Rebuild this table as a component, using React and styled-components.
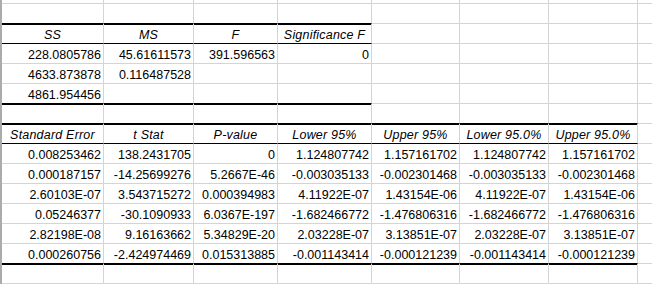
import React from "react";
import styled, { createGlobalStyle } from "styled-components";

const GlobalStyle = createGlobalStyle`
  html, body {
    margin: 0;
    padding: 0;
    background: #fff;
    overflow: hidden;
  }
`;

const COLS = [102, 90, 84, 94, 88, 89, 89, 20];
const GRID = "#d4d4d4";

const Sheet = styled.div`
  display: grid;
  grid-template-columns: ${COLS.map((w) => `${w}px`).join(" ")};
  grid-template-rows: 4px;
  grid-auto-rows: 20px;
  border-left: 2px solid #ababab;
  width: max-content;
  font-family: "Liberation Sans", Arial, sans-serif;
  font-size: 12.5px;
  color: #000;
`;

const Cell = styled.div`
  box-sizing: border-box;
  border-right: 1px solid ${GRID};
  border-bottom: 1px solid ${(p) => (p.$edge ? "#000" : GRID)};
  box-shadow: ${(p) => (p.$edge === "thick" ? "0 1px 0 #000" : "none")};
  padding: 4px 2px 0 2px;
  line-height: 15px;
  white-space: nowrap;
  overflow: visible;
  text-align: ${(p) => (p.$head ? "center" : "right")};
  font-style: ${(p) => (p.$head ? "italic" : "normal")};
  letter-spacing: ${(p) => (p.$head ? "0.2px" : "0")};
`;

const EdgeCell = styled(Cell)`
  padding: 0;
`;

const TOP_HEAD = ["SS", "MS", "F", "Significance F"];
const TOP_ROWS = [
  ["228.0805786", "45.61611573", "391.596563", "0"],
  ["4633.873878", "0.116487528"],
  ["4861.954456"],
];

const COEF_HEAD = [
  "Standard Error",
  "t Stat",
  "P-value",
  "Lower 95%",
  "Upper 95%",
  "Lower 95.0%",
  "Upper 95.0%",
];
const COEF_ROWS = [
  ["0.008253462", "138.2431705", "0", "1.124807742", "1.157161702", "1.124807742", "1.157161702"],
  ["0.000187157", "-14.25699276", "5.2667E-46", "-0.003035133", "-0.002301468", "-0.003035133", "-0.002301468"],
  ["2.60103E-07", "3.543715272", "0.000394983", "4.11922E-07", "1.43154E-06", "4.11922E-07", "1.43154E-06"],
  ["0.05246377", "-30.1090933", "6.0367E-197", "-1.682466772", "-1.476806316", "-1.682466772", "-1.476806316"],
  ["2.82198E-08", "9.16163662", "5.34829E-20", "2.03228E-07", "3.13851E-07", "2.03228E-07", "3.13851E-07"],
  ["0.000260756", "-2.424974469", "0.015313885", "-0.001143414", "-0.000121239", "-0.001143414", "-0.000121239"],
];

// each row: cells text, header flag, bottom edge and how many columns it covers
const ROWS = [
  { cells: [], edge: "thick", span: 4 },
  { cells: TOP_HEAD, head: true, edge: "thin", span: 4 },
  { cells: TOP_ROWS[0] },
  { cells: TOP_ROWS[1] },
  { cells: TOP_ROWS[2], edge: "thick", span: 4 },
  { cells: [], edge: "thick", span: 7 },
  { cells: COEF_HEAD, head: true, edge: "thin", span: 7 },
  ...COEF_ROWS.map((cells, i) =>
    i === COEF_ROWS.length - 1 ? { cells, edge: "thick", span: 7 } : { cells }
  ),
  { cells: [] },
];

export default function App() {
  return (
    <>
      <GlobalStyle />
      <Sheet>
        {COLS.map((_, c) => (
          <EdgeCell key={`top-${c}`} />
        ))}
        {ROWS.map((row, r) =>
          COLS.map((_, c) => (
            <Cell
              key={`${r}-${c}`}
              $head={row.head}
              $edge={row.edge && c < row.span ? row.edge : undefined}
            >
              {row.cells[c] || ""}
            </Cell>
          ))
        )}
      </Sheet>
    </>
  );
}
